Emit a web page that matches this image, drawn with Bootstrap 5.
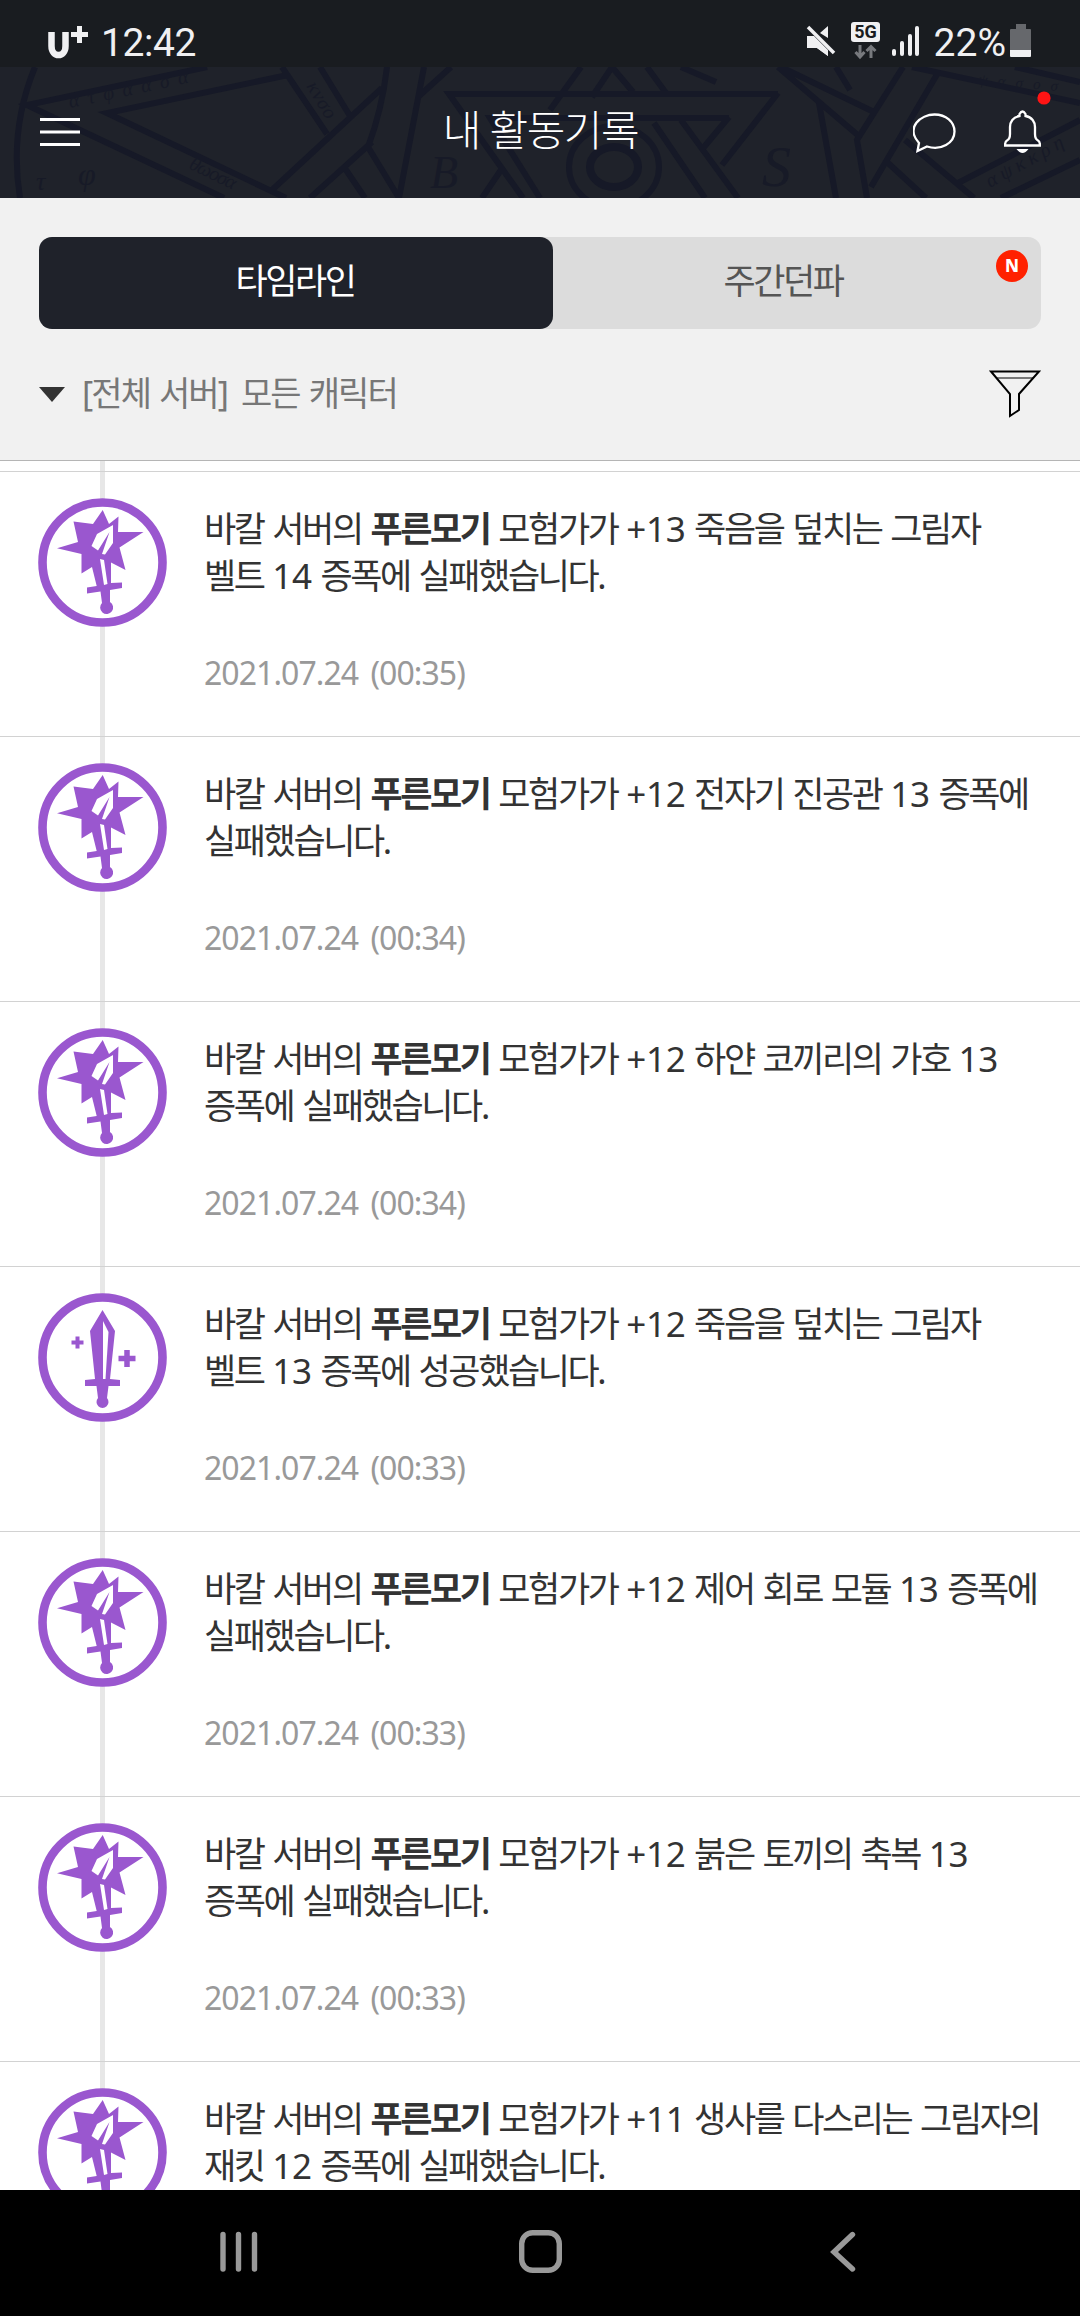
<!DOCTYPE html>
<html lang="ko">
<head>
<meta charset="utf-8">
<meta name="viewport" content="width=device-width, initial-scale=1">
<title>내 활동기록</title>
<link rel="stylesheet" href="https://cdn.jsdelivr.net/npm/bootstrap@5.3.0/dist/css/bootstrap.min.css">
<style>
  body { font-family: "Noto Sans", "Noto Sans CJK KR", sans-serif; height: 2316px; color: #333; }
  .status-bar { height: 67px; background: #191c20; font: 39px/48px Roboto, sans-serif; color: #f0f0f2; padding: 19px 48px 0 47px; }
  .carrier-logo { margin-right: 12px; margin-bottom: 3px; }
  .status-icons { margin-bottom: 5px; }
  .clock-text { letter-spacing: -.4px; }
  .app-header { height: 131px; background: #1f222a; padding: 0 39px 0 40px; }
  .app-title { font-size: 42px; font-weight: 300; letter-spacing: -1.4px; line-height: 60px; color: #fff; margin-top: -6px; }
  .header-side { width: 128px; }
  .bell-dot { top: -19px; right: -10px; }
  .filter-panel { height: 263px; background: #f1f1f1; border-bottom: 1px solid #b5b5b5; padding: 39px 39px 0; }
  .tab-strip { height: 92px; background: #dcdcdc; border-radius: 13px; }
  .tab-strip .nav-link { width: 514px; height: 92px; padding: 0 2px 0 0; font-size: 35px; letter-spacing: -2.4px; line-height: 87px; text-align: center; color: #555; border-radius: 13px; }
  .tab-strip .nav-link.active { background: #1f222a; color: #fff; z-index: 1; }
  .tab-strip .nav-item + .nav-item { margin-left: -26px; }
  .new-badge { right: 13px; top: 13px; width: 32px; height: 32px; background: #ff2100; color: #fff; font-size: 17px; font-weight: 800; line-height: 32px; letter-spacing: 0; }
  .picker-row { height: 130px; }
  .picker-text { font-size: 34px; line-height: 60px; letter-spacing: -1.9px; word-spacing: 2px; color: #777; margin: -3px 0 0 17px; }
  .picker-text span { margin-right: 5px; }
  .feed { padding-top: 10px; }
  .feed::before { content: ""; position: absolute; left: 100px; top: 0; bottom: 0; width: 5px; background: #e7e7e7; }
  .feed-item { height: 265px; border-top: 1px solid #d2d2d2; padding: 26px 20px 0 38px; }
  .feed-icon { width: 129px; height: 129px; }
  .feed-copy { margin-left: 37px; padding-top: 7px; }
  .feed-copy p { font-size: 35px; line-height: 47px; letter-spacing: -2.4px; word-spacing: 2px; }
  .feed-copy p i { font-style: normal; letter-spacing: -.3px; }
  .feed-date { font-size: 32px; line-height: 47px; letter-spacing: -.95px; word-spacing: 5px; color: #999; margin-top: 50px; }
  .nav-keys { height: 126px; background: #000; padding: 0 5px 3px 0; }
</style>
<script src="https://cdn.jsdelivr.net/npm/bootstrap@5.3.0/dist/js/bootstrap.bundle.min.js"></script>
</head>
<body class="d-flex flex-column overflow-hidden bg-white m-0">

<svg width="0" height="0" class="position-absolute">
  <symbol id="fail" viewBox="0 0 129 129">
    <circle cx="64.5" cy="64.5" r="60" fill="#fff" stroke="#9a57cf" stroke-width="8.6"/>
    <path fill="#9a57cf" d="M64.700 12 71 26 80.500 18.500 80 34 105.500 34 81.500 49.500 87.500 72 73 64.500V85L84 84.500V90L72 92V104A6.500 6.500 0 1 1 64 105L62.500 93.500 49 95.500V89.500L58.700 88 54 69 43.500 75.500V56L19 50.300 40 44 35.500 23.500 55 26Z"/>
    <path fill="#fff" d="M75 27 59 36 53.500 48 60 52.500 71.500 34 64 56 67 56.500 75 45ZM62 61 66 62 69.500 86 66 87Z"/>
  </symbol>
  <symbol id="success" viewBox="0 0 129 129">
    <circle cx="64.5" cy="64.5" r="60" fill="#fff" stroke="#9a57cf" stroke-width="8.6"/>
    <path fill="#9a57cf" d="M64.500 17 77 38 72 86 82 87V93H70.500L69 105A6 6 0 1 1 60 105L58.500 93H47V87L57 86 52 38Z"/>
    <path fill="#fff" d="M65 28 70.500 39 67.500 86H65Z"/>
    <path stroke="#9a57cf" stroke-width="4" d="M39.500 43.500V55.500M33.500 49.500H45.500"/>
    <path stroke="#9a57cf" stroke-width="5.500" d="M89 57V74M80.500 65.500H97.500"/>
  </symbol>
</svg>

<div class="status-bar d-flex align-items-center flex-shrink-0">
  <svg class="carrier-logo" width="42" height="36" viewBox="0 0 42 36" fill="none" stroke="#f0f0f2"><path stroke-width="6.500" d="M4.500 8V22C4.500 34 18.500 34 18.500 22V8"/><path stroke-width="5" d="M32.500 2V19M24 10.500H41"/></svg>
  <span class="clock-text">12:42</span>
  <div class="d-flex align-items-center ms-auto">
    <svg class="status-icons" width="120" height="40" viewBox="807 22 120 40"><g fill="#f0f0f2">
      <path d="M808 37H813L829 53V57L818 49H808ZM829 27V39L821 34Z"/><path d="M808 37H815L829 51V57L818 49H808Z"/><path stroke="#f0f0f2" stroke-width="3.500" d="M809 28 835 54"/>
      <rect x="852" y="23" width="29" height="20" rx="3"/>
      <rect x="893" y="50" width="4" height="7" rx="2"/><rect x="901" y="42" width="4" height="15" rx="2"/><rect x="909" y="35" width="4" height="22" rx="2"/><rect x="916" y="27" width="4" height="30" rx="2"/></g>
      <path fill="none" stroke="#77797d" stroke-width="3" d="M861 46V58M856.500 53 861 58 865.500 53M872 59V47.500M867.500 52 872 47.500 876.500 52"/>
      <text x="866.500" y="39" font-size="18" font-weight="700" fill="#191c20" text-anchor="middle">5G</text></svg>
    <span class="ms-2">22%</span>
    <svg class="ms-1 status-icons" width="22" height="34" viewBox="0 0 22 34"><path fill="#66686c" d="M6 0H16V5H20Q21 5 21 6V26H0V6Q0 5 1 5H6Z"/><path fill="#f0f0f2" d="M0 26H21V32Q21 33 20 33H1Q0 33 0 32Z"/></svg>
  </div>
</div>

<header class="app-header position-relative d-flex align-items-center justify-content-between flex-shrink-0">
  <svg class="position-absolute top-0 start-0" width="1080" height="131" viewBox="0 67 1080 131" fill="none" stroke="#161927" stroke-width="6">
    <path d="M35 67Q9 130 20 198M207 67 27 105 224 198M288 75 107 113 286 198M282 67 327 134M320 67 350 116M382 88 272 190M372 142 310 198M387 67Q382 110 368 147L399 198 424 67M344 167 365 198M451 67 418 97M778 94H449L523 198M729 118H490L540 198M503 167 482 198M581 67 550 110M592 97 612 67 633 92M647 67 666 93M681 67 716 82M778 93 722 165M729 117 704 147M654 123 705 198M681 120 738 198M781 67 874 112M836 67 850 90M778 67 860 137M819 103 836 198M903 67 857 140 867 198M939 71 871 187M912 67 1080 103M1015 67 1080 82M905 140 974 198M958 183 1080 120M888 163 926 198M1001 198 1080 160"/>
    <ellipse cx="614" cy="167" rx="45" ry="41"/><ellipse cx="614" cy="167" rx="24" ry="20" stroke-width="8"/>
    <g stroke="none" fill="#171a27" font-family="Liberation Serif, serif" font-style="italic" font-size="20">
      <text transform="translate(70 108) rotate(-12)" textLength="122">ατφαασα</text>
      <text transform="translate(188 168) rotate(26)" textLength="50">θωοσα</text>
      <text transform="translate(306 86) rotate(59)" textLength="40">κνσο</text>
      <text transform="translate(978 84) rotate(5)" textLength="80" font-size="15">ψασοσ</text>
      <text transform="translate(990 188) rotate(-29)" textLength="86">αψκκρη</text>
      <text x="78" y="185" font-size="32">φ</text><text x="36" y="190" font-size="26">τ</text>
      <text x="430" y="188" font-size="46">B</text><text x="762" y="186" font-size="58">S</text>
    </g>
  </svg>
  <div class="header-side position-relative">
    <svg class="d-block" width="40" height="30" viewBox="0 0 40 30" fill="#fff"><path d="M0 0H40V3H0ZM0 12.500H40V15.500H0ZM0 25H40V28H0Z"/></svg>
  </div>
  <h1 class="app-title position-relative mb-0">내 활동기록</h1>
  <div class="header-side position-relative d-flex justify-content-between align-items-center">
    <svg width="43" height="40" viewBox="0 0 43 40" fill="none" stroke="#fff" stroke-width="2.300"><path d="M6 30C-8 14 8 1.500 21.500 1.500C33 1.500 41.500 9 41.500 18.500C41.500 30 28 38 14 33.500L4.500 38Z"/></svg>
    <svg width="37" height="45" viewBox="0 0 37 45" fill="none" stroke="#fff" stroke-width="2.300"><path d="M15.500 6V4Q18.500-1 21.500 4V6C28 7 31 12 31 17V24Q31 29 34 30.500Q36 31.500 36 35.500H1Q1 31.500 3 30.500Q6 29 6 24V17C6 12 9 7 15.500 6Z"/><path d="M12.500 39H24.500Q18.500 47 12.500 39Z" fill="#fff" stroke="none"/></svg>
    <svg class="bell-dot position-absolute" width="14" height="14" viewBox="0 0 14 14"><circle cx="7" cy="7" r="6.600" fill="#ff1414"/></svg>
  </div>
</header>

<section class="filter-panel flex-shrink-0">
  <ul class="nav nav-pills tab-strip flex-nowrap">
    <li class="nav-item"><a class="nav-link active position-relative" href="#">타임라인</a></li>
    <li class="nav-item"><a class="nav-link position-relative" href="#">주간던파<span class="new-badge position-absolute rounded-circle">N</span></a></li>
  </ul>
  <div class="picker-row d-flex align-items-center">
    <svg width="26" height="15" viewBox="0 0 26 15"><path fill="#333" d="M0 0H26L13 15Z"/></svg>
    <div class="picker-text"><span>[전체 서버]</span> 모든 캐릭터</div>
    <svg class="ms-auto" width="52" height="49" viewBox="0 0 52 49" fill="none" stroke="#000" stroke-width="2"><path d="M2 1.500H50L30 24V40L21 46V24Z"/><path d="M8 8H44" stroke-width="1.200"/></svg>
  </div>
</section>

<main class="feed position-relative flex-grow-1 overflow-hidden">
  <article class="feed-item position-relative d-flex"><svg class="feed-icon flex-shrink-0"><use href="#fail"/></svg><div class="feed-copy text-nowrap"><p class="mb-0">바칼 서버의 <b>푸른모기</b> 모험가가 <i>+13</i> 죽음을 덮치는 그림자<br>벨트 <i>14</i> 증폭에 실패했습니다.</p><div class="feed-date">2021.07.24 (00:35)</div></div></article>
  <article class="feed-item position-relative d-flex"><svg class="feed-icon flex-shrink-0"><use href="#fail"/></svg><div class="feed-copy text-nowrap"><p class="mb-0">바칼 서버의 <b>푸른모기</b> 모험가가 <i>+12</i> 전자기 진공관 <i>13</i> 증폭에<br>실패했습니다.</p><div class="feed-date">2021.07.24 (00:34)</div></div></article>
  <article class="feed-item position-relative d-flex"><svg class="feed-icon flex-shrink-0"><use href="#fail"/></svg><div class="feed-copy text-nowrap"><p class="mb-0">바칼 서버의 <b>푸른모기</b> 모험가가 <i>+12</i> 하얀 코끼리의 가호 <i>13</i><br>증폭에 실패했습니다.</p><div class="feed-date">2021.07.24 (00:34)</div></div></article>
  <article class="feed-item position-relative d-flex"><svg class="feed-icon flex-shrink-0"><use href="#success"/></svg><div class="feed-copy text-nowrap"><p class="mb-0">바칼 서버의 <b>푸른모기</b> 모험가가 <i>+12</i> 죽음을 덮치는 그림자<br>벨트 <i>13</i> 증폭에 성공했습니다.</p><div class="feed-date">2021.07.24 (00:33)</div></div></article>
  <article class="feed-item position-relative d-flex"><svg class="feed-icon flex-shrink-0"><use href="#fail"/></svg><div class="feed-copy text-nowrap"><p class="mb-0">바칼 서버의 <b>푸른모기</b> 모험가가 <i>+12</i> 제어 회로 모듈 <i>13</i> 증폭에<br>실패했습니다.</p><div class="feed-date">2021.07.24 (00:33)</div></div></article>
  <article class="feed-item position-relative d-flex"><svg class="feed-icon flex-shrink-0"><use href="#fail"/></svg><div class="feed-copy text-nowrap"><p class="mb-0">바칼 서버의 <b>푸른모기</b> 모험가가 <i>+12</i> 붉은 토끼의 축복 <i>13</i><br>증폭에 실패했습니다.</p><div class="feed-date">2021.07.24 (00:33)</div></div></article>
  <article class="feed-item position-relative d-flex"><svg class="feed-icon flex-shrink-0"><use href="#fail"/></svg><div class="feed-copy text-nowrap"><p class="mb-0">바칼 서버의 <b>푸른모기</b> 모험가가 <i>+11</i> 생사를 다스리는 그림자의<br>재킷 <i>12</i> 증폭에 실패했습니다.</p></div></article>
</main>

<nav class="nav-keys d-flex justify-content-center align-items-center flex-shrink-0">
  <svg width="640" height="46" viewBox="218 2229 640 46" fill="none" stroke="#999" stroke-width="5.400" stroke-linecap="round"><path d="M223 2234.500V2269M238.500 2234.500V2269M254.500 2234.500V2269M852.500 2234.500 834 2252 852.500 2269"/><rect x="521.700" y="2232.700" width="37.600" height="37.600" rx="11"/></svg>
</nav>
</body>
</html>
